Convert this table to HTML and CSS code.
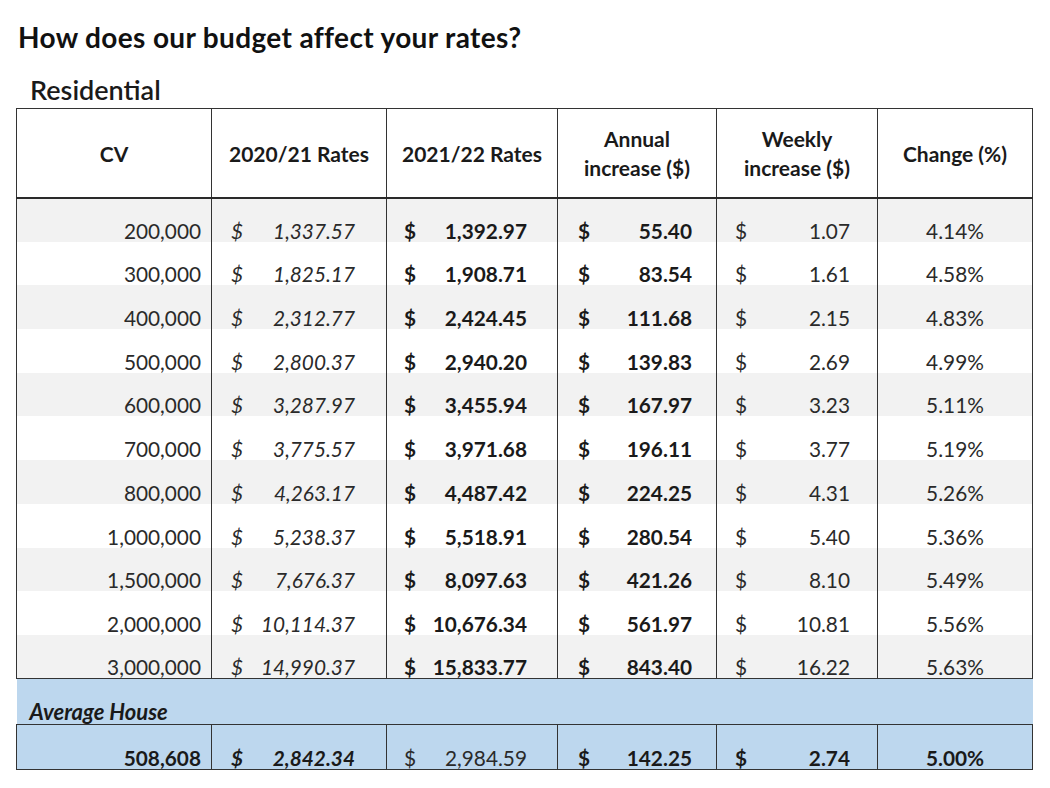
FILE: index.html
```html
<!DOCTYPE html>
<html>
<head>
<meta charset="utf-8">
<link rel="stylesheet" href="styles.css">
</head>
<body>
<div class="page">
  <h1 class="title">How does our budget affect your rates?</h1>
  <h2 class="subtitle">Residential</h2>
  <table class="rates">
    <colgroup>
      <col class="c1"><col class="c2"><col class="c3"><col class="c4"><col class="c5"><col class="c6">
    </colgroup>
    <thead>
      <tr>
        <th>CV</th>
        <th>2020/21 Rates</th>
        <th>2021/22 Rates</th>
        <th>Annual<br>increase ($)</th>
        <th>Weekly<br>increase ($)</th>
        <th>Change (%)</th>
      </tr>
    </thead>
    <tbody>
      <tr class="g"><td class="cv">200,000</td><td class="m p2 it"><span>$</span><span>1,337.57</span></td><td class="m p3 b"><span>$</span><span>1,392.97</span></td><td class="m p4 b"><span>$</span><span>55.40</span></td><td class="m p5"><span>$</span><span>1.07</span></td><td class="pc">4.14%</td></tr>
      <tr><td class="cv">300,000</td><td class="m p2 it"><span>$</span><span>1,825.17</span></td><td class="m p3 b"><span>$</span><span>1,908.71</span></td><td class="m p4 b"><span>$</span><span>83.54</span></td><td class="m p5"><span>$</span><span>1.61</span></td><td class="pc">4.58%</td></tr>
      <tr class="g"><td class="cv">400,000</td><td class="m p2 it"><span>$</span><span>2,312.77</span></td><td class="m p3 b"><span>$</span><span>2,424.45</span></td><td class="m p4 b"><span>$</span><span>111.68</span></td><td class="m p5"><span>$</span><span>2.15</span></td><td class="pc">4.83%</td></tr>
      <tr><td class="cv">500,000</td><td class="m p2 it"><span>$</span><span>2,800.37</span></td><td class="m p3 b"><span>$</span><span>2,940.20</span></td><td class="m p4 b"><span>$</span><span>139.83</span></td><td class="m p5"><span>$</span><span>2.69</span></td><td class="pc">4.99%</td></tr>
      <tr class="g"><td class="cv">600,000</td><td class="m p2 it"><span>$</span><span>3,287.97</span></td><td class="m p3 b"><span>$</span><span>3,455.94</span></td><td class="m p4 b"><span>$</span><span>167.97</span></td><td class="m p5"><span>$</span><span>3.23</span></td><td class="pc">5.11%</td></tr>
      <tr><td class="cv">700,000</td><td class="m p2 it"><span>$</span><span>3,775.57</span></td><td class="m p3 b"><span>$</span><span>3,971.68</span></td><td class="m p4 b"><span>$</span><span>196.11</span></td><td class="m p5"><span>$</span><span>3.77</span></td><td class="pc">5.19%</td></tr>
      <tr class="g"><td class="cv">800,000</td><td class="m p2 it"><span>$</span><span>4,263.17</span></td><td class="m p3 b"><span>$</span><span>4,487.42</span></td><td class="m p4 b"><span>$</span><span>224.25</span></td><td class="m p5"><span>$</span><span>4.31</span></td><td class="pc">5.26%</td></tr>
      <tr><td class="cv">1,000,000</td><td class="m p2 it"><span>$</span><span>5,238.37</span></td><td class="m p3 b"><span>$</span><span>5,518.91</span></td><td class="m p4 b"><span>$</span><span>280.54</span></td><td class="m p5"><span>$</span><span>5.40</span></td><td class="pc">5.36%</td></tr>
      <tr class="g"><td class="cv">1,500,000</td><td class="m p2 it"><span>$</span><span>7,676.37</span></td><td class="m p3 b"><span>$</span><span>8,097.63</span></td><td class="m p4 b"><span>$</span><span>421.26</span></td><td class="m p5"><span>$</span><span>8.10</span></td><td class="pc">5.49%</td></tr>
      <tr><td class="cv">2,000,000</td><td class="m p2 it"><span>$</span><span>10,114.37</span></td><td class="m p3 b"><span>$</span><span>10,676.34</span></td><td class="m p4 b"><span>$</span><span>561.97</span></td><td class="m p5"><span>$</span><span>10.81</span></td><td class="pc">5.56%</td></tr>
      <tr class="g last"><td class="cv">3,000,000</td><td class="m p2 it"><span>$</span><span>14,990.37</span></td><td class="m p3 b"><span>$</span><span>15,833.77</span></td><td class="m p4 b"><span>$</span><span>843.40</span></td><td class="m p5"><span>$</span><span>16.22</span></td><td class="pc">5.63%</td></tr>
      <tr class="avg-label"><td colspan="6">Average House</td></tr>
      <tr class="avg"><td class="cv b">508,608</td><td class="m p2 it b"><span>$</span><span>2,842.34</span></td><td class="m p3"><span>$</span><span>2,984.59</span></td><td class="m p4 b"><span>$</span><span>142.25</span></td><td class="m p5 b"><span>$</span><span>2.74</span></td><td class="pc b">5.00%</td></tr>
    </tbody>
  </table>
</div>
</body>
</html>
```
FILE: styles.css
```css
html, body {
  margin: 0;
  padding: 0;
  background: #ffffff;
}

.page {
  font-family: "Lato", "Open Sans", sans-serif;
  color: #222222;
  padding: 18px 0 0 16px;
  width: 1016px;
}

.title {
  margin: 0 0 0 2px;
  font-size: 28px;
  font-weight: 700;
  letter-spacing: 0.35px;
  line-height: 38px;
  color: #111111;
}

.subtitle {
  margin: 15px 0 0 14px;
  font-size: 27px;
  font-weight: 600;
  line-height: 37px;
  color: #1a1a1a;
}

.rates {
  width: 1016px;
  border-collapse: collapse;
  table-layout: fixed;
  font-size: 20.8px;
  color: #2a2a2a;
}

.c1 { width: 195px; }
.c2 { width: 175px; }
.c3 { width: 171px; }
.c4 { width: 159px; }
.c5 { width: 161px; }
.c6 { width: 155px; }

.rates th {
  height: 88px;
  padding: 0 4px;
  font-weight: 700;
  font-size: 21px;
  line-height: 29px;
  text-align: center;
  vertical-align: middle;
  border: 1px solid #333333;
  border-bottom: 2px solid #2a2a2a;
  color: #1a1a1a;
}

.rates td {
  height: 43.7px;
  padding: 0;
  box-sizing: border-box;
  vertical-align: bottom;
  line-height: 22px;
  border-left: 1px solid #333333;
  border-right: 1px solid #333333;
}

.rates tr.g td {
  background: #f2f2f2;
}

.rates tr.last td {
  border-bottom: 1px solid #333333;
}

.cv {
  text-align: right;
  padding-right: 10px !important;
}

.m {
  overflow: hidden;
}

.m span:first-child {
  float: left;
}

.m span:last-child {
  float: right;
}

.p2 { padding-left: 19px !important; padding-right: 31px !important; }
.p3 { padding-left: 17px !important; padding-right: 30px !important; }
.p4 { padding-left: 20px !important; padding-right: 24px !important; }
.p5 { padding-left: 18px !important; padding-right: 27px !important; }

.pc {
  text-align: center;
}

.it { font-style: italic; }
.b { font-weight: 700; color: #1a1a1a; }

.rates tr.avg-label td {
  height: 46px;
  background: #bdd7ee;
  border: none;
  border-bottom: 1px solid #333333;
  font-size: 22px;
  font-weight: 700;
  font-style: italic;
  line-height: 22px;
  padding: 0 0 1px 13px;
  color: #1a1a1a;
}

.rates tr.avg td {
  height: 45px;
  background: #bdd7ee;
  border: 1px solid #333333;
  padding-bottom: 0;
}
```
